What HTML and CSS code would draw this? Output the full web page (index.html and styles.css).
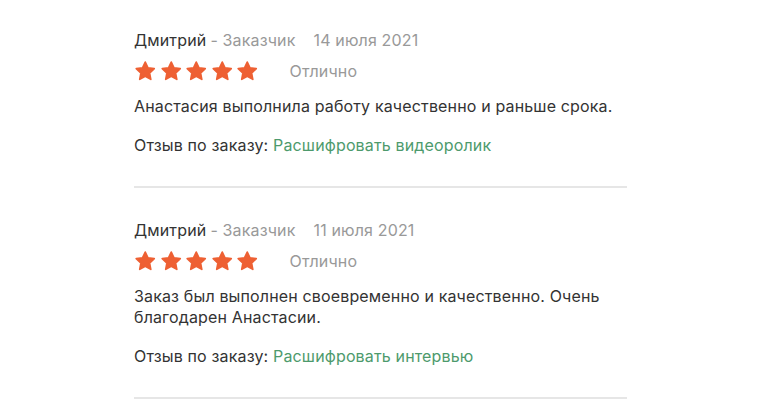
FILE: index.html
```html
<!DOCTYPE html>
<html lang="ru">
<head>
<meta charset="utf-8">
<link rel="stylesheet" href="styles.css">
</head>
<body>
<div class="reviews">
  <div class="review">
    <div class="meta"><span class="name">Дмитрий</span> <span class="role">- Заказчик</span><span class="date">14 июля 2021</span></div>
    <div class="rating">
      <div class="stars">
        <svg viewBox="0 0 24 24"><path d="M12 2.2l2.9 6.2 6.7.8-5 4.7 1.3 6.7L12 17.3l-5.9 3.3 1.3-6.7-5-4.7 6.7-.8z"/></svg>
        <svg viewBox="0 0 24 24"><path d="M12 2.2l2.9 6.2 6.7.8-5 4.7 1.3 6.7L12 17.3l-5.9 3.3 1.3-6.7-5-4.7 6.7-.8z"/></svg>
        <svg viewBox="0 0 24 24"><path d="M12 2.2l2.9 6.2 6.7.8-5 4.7 1.3 6.7L12 17.3l-5.9 3.3 1.3-6.7-5-4.7 6.7-.8z"/></svg>
        <svg viewBox="0 0 24 24"><path d="M12 2.2l2.9 6.2 6.7.8-5 4.7 1.3 6.7L12 17.3l-5.9 3.3 1.3-6.7-5-4.7 6.7-.8z"/></svg>
        <svg viewBox="0 0 24 24"><path d="M12 2.2l2.9 6.2 6.7.8-5 4.7 1.3 6.7L12 17.3l-5.9 3.3 1.3-6.7-5-4.7 6.7-.8z"/></svg>
      </div>
      <span class="grade">Отлично</span>
    </div>
    <p class="text">Анастасия выполнила работу качественно и раньше срока.</p>
    <p class="order">Отзыв по заказу: <a class="link" href="#">Расшифровать видеоролик</a></p>
  </div>
  <div class="review">
    <div class="meta"><span class="name">Дмитрий</span> <span class="role">- Заказчик</span><span class="date">11 июля 2021</span></div>
    <div class="rating">
      <div class="stars">
        <svg viewBox="0 0 24 24"><path d="M12 2.2l2.9 6.2 6.7.8-5 4.7 1.3 6.7L12 17.3l-5.9 3.3 1.3-6.7-5-4.7 6.7-.8z"/></svg>
        <svg viewBox="0 0 24 24"><path d="M12 2.2l2.9 6.2 6.7.8-5 4.7 1.3 6.7L12 17.3l-5.9 3.3 1.3-6.7-5-4.7 6.7-.8z"/></svg>
        <svg viewBox="0 0 24 24"><path d="M12 2.2l2.9 6.2 6.7.8-5 4.7 1.3 6.7L12 17.3l-5.9 3.3 1.3-6.7-5-4.7 6.7-.8z"/></svg>
        <svg viewBox="0 0 24 24"><path d="M12 2.2l2.9 6.2 6.7.8-5 4.7 1.3 6.7L12 17.3l-5.9 3.3 1.3-6.7-5-4.7 6.7-.8z"/></svg>
        <svg viewBox="0 0 24 24"><path d="M12 2.2l2.9 6.2 6.7.8-5 4.7 1.3 6.7L12 17.3l-5.9 3.3 1.3-6.7-5-4.7 6.7-.8z"/></svg>
      </div>
      <span class="grade">Отлично</span>
    </div>
    <p class="text">Заказ был выполнен своевременно и качественно. Очень благодарен Анастасии.</p>
    <p class="order">Отзыв по заказу: <a class="link" href="#">Расшифровать интервью</a></p>
  </div>
</div>
</body>
</html>
```
FILE: styles.css
```css
html, body {
  margin: 0;
  padding: 0;
  background: #fff;
}
body {
  font-family: Inter, "Liberation Sans", Arial, sans-serif;
  color: #333;
  font-size: 16px;
  letter-spacing: 0.15px;
}
.reviews {
  width: 493px;
  margin-left: 134px;
  padding-top: 29px;
}
.review {
  padding-bottom: 30px;
  border-bottom: 2px solid #e6e6e6;
}
.review + .review {
  padding-top: 31px;
}
.meta {
  line-height: 22px;
  display: flex;
  align-items: baseline;
}
.name {
  color: #333;
}
.role {
  color: #999;
  margin-left: 4px;
}
.date {
  color: #999;
  margin-left: 18px;
}
.rating {
  margin-top: 9px;
  display: flex;
  align-items: center;
  height: 22px;
}
.stars {
  display: flex;
  gap: 3px;
}
.stars svg {
  width: 22.5px;
  height: 22.5px;
  fill: #ee6033;
  stroke: #ee6033;
  stroke-width: 1.8;
  stroke-linejoin: round;
}
.grade {
  margin-left: 31px;
  color: #999;
  font-size: 16px;
}
.text {
  margin: 14px 0 0;
  line-height: 21px;
}
.order {
  margin: 17px 0 0;
  line-height: 22px;
}
.link {
  color: #4d9a6c;
  text-decoration: none;
}
```
